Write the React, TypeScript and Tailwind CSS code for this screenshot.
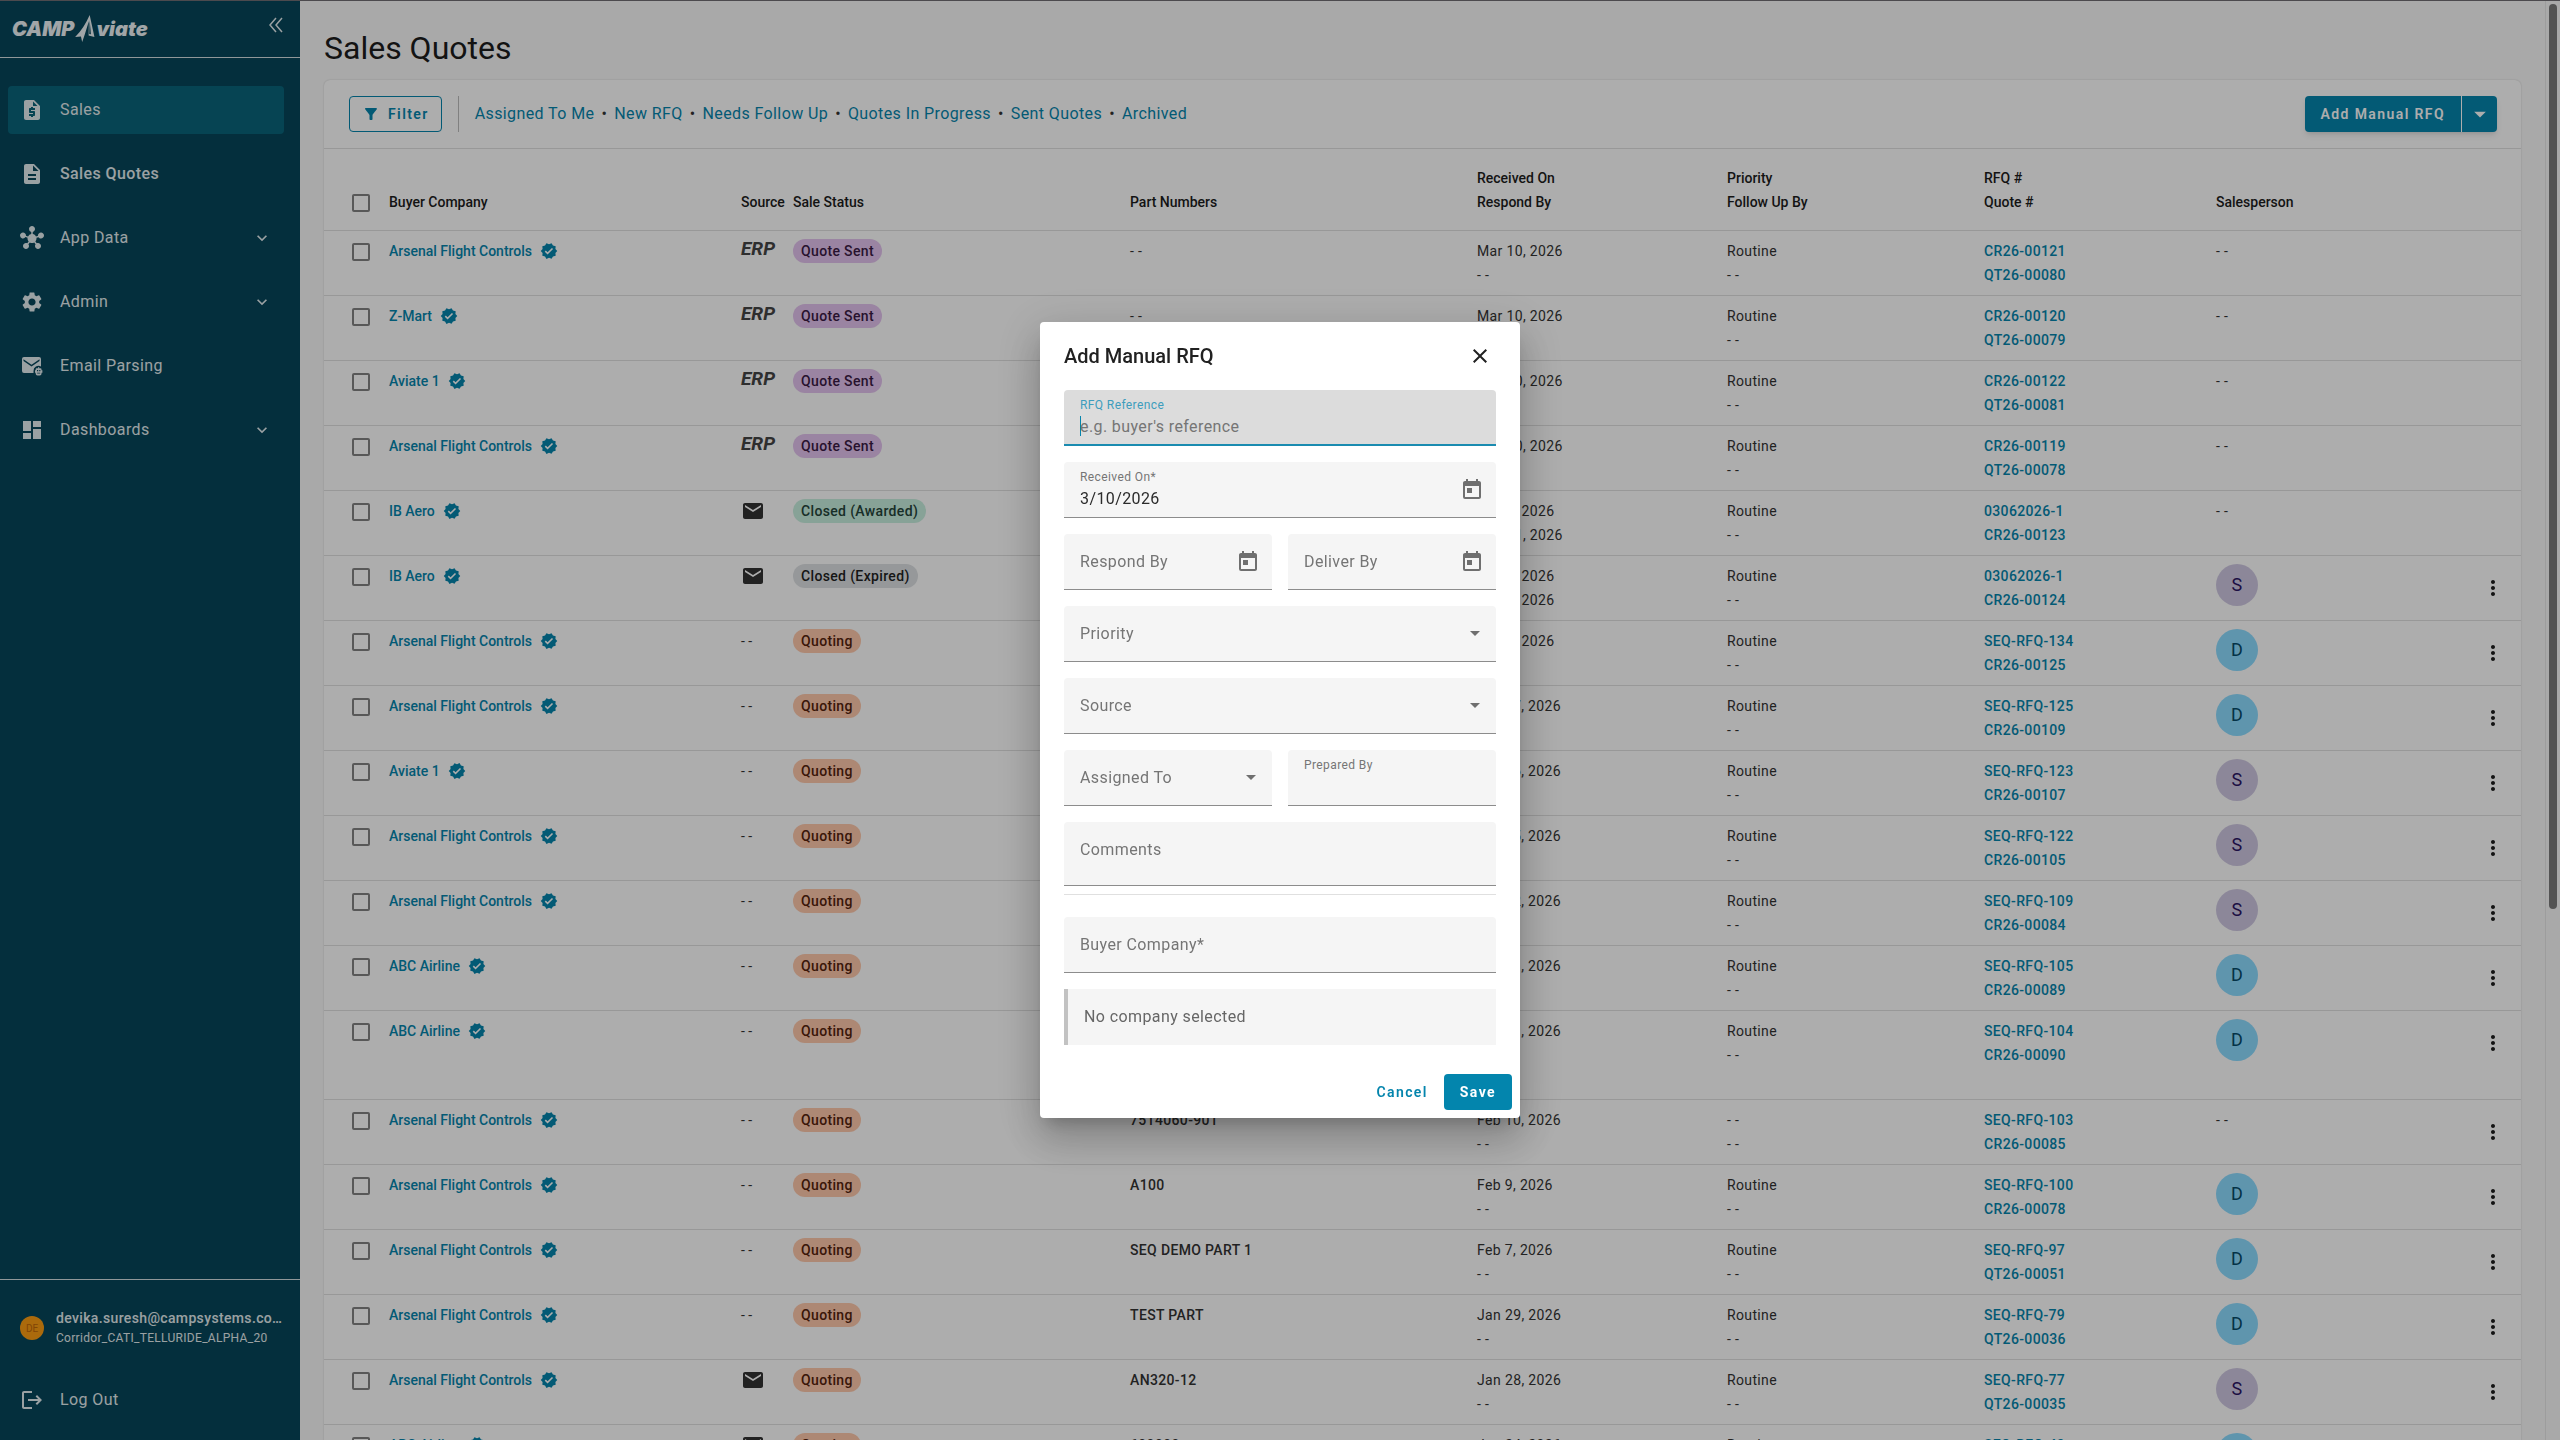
import React from "react";
import {
  MdArrowDropDown,
  MdClose,
  MdDashboard,
  MdDescription,
  MdEmail,
  MdFilterAlt,
  MdHub,
  MdKeyboardArrowDown,
  MdLogout,
  MdMoreVert,
  MdRequestQuote,
  MdSettings,
  MdToday,
  MdVerified,
} from "react-icons/md";

type Status = "Quote Sent" | "Closed (Awarded)" | "Closed (Expired)" | "Quoting";

type Quote = {
  company: string;
  source: "erp" | "mail" | "none";
  status: Status;
  part: string;
  received: string;
  respond: string;
  priority: string;
  rfq: string;
  quote: string;
  person: "S" | "D" | "";
  menu: boolean;
  extraLine?: string;
};

const NONE = "- -";
const AFC = "Arsenal Flight Controls";

const row = (
  company: string,
  source: Quote["source"],
  status: Status,
  part: string,
  received: string,
  rfq: string,
  quote: string,
  person: Quote["person"],
  menu: boolean,
  more: Partial<Quote> = {},
): Quote => ({ company, source, status, part, received, respond: NONE, priority: "Routine", rfq, quote, person, menu, ...more });

const quotes: Quote[] = [
  row(AFC, "erp", "Quote Sent", NONE, "Mar 10, 2026", "CR26-00121", "QT26-00080", "", false),
  row("Z-Mart", "erp", "Quote Sent", NONE, "Mar 10, 2026", "CR26-00120", "QT26-00079", "", false),
  row("Aviate 1", "erp", "Quote Sent", NONE, "Mar 10, 2026", "CR26-00122", "QT26-00081", "", false),
  row(AFC, "erp", "Quote Sent", NONE, "Mar 10, 2026", "CR26-00119", "QT26-00078", "", false),
  row("IB Aero", "mail", "Closed (Awarded)", NONE, "Mar 6, 2026", "03062026-1", "CR26-00123", "", false, { respond: "Mar 11, 2026" }),
  row("IB Aero", "mail", "Closed (Expired)", NONE, "Mar 6, 2026", "03062026-1", "CR26-00124", "S", true, { respond: "Mar 9, 2026" }),
  row(AFC, "none", "Quoting", NONE, "Mar 5, 2026", "SEQ-RFQ-134", "CR26-00125", "D", true),
  row(AFC, "none", "Quoting", NONE, "Feb 27, 2026", "SEQ-RFQ-125", "CR26-00109", "D", true),
  row("Aviate 1", "none", "Quoting", NONE, "Feb 26, 2026", "SEQ-RFQ-123", "CR26-00107", "S", true),
  row(AFC, "none", "Quoting", NONE, "Feb 25, 2026", "SEQ-RFQ-122", "CR26-00105", "S", true),
  row(AFC, "none", "Quoting", NONE, "Feb 12, 2026", "SEQ-RFQ-109", "CR26-00084", "S", true),
  row("ABC Airline", "none", "Quoting", NONE, "Feb 11, 2026", "SEQ-RFQ-105", "CR26-00089", "D", true),
  row("ABC Airline", "none", "Quoting", "7514060-901", "Feb 11, 2026", "SEQ-RFQ-104", "CR26-00090", "D", true, { extraLine: "7514060-902" }),
  row(AFC, "none", "Quoting", "7514060-901", "Feb 10, 2026", "SEQ-RFQ-103", "CR26-00085", "", true, { priority: NONE }),
  row(AFC, "none", "Quoting", "A100", "Feb 9, 2026", "SEQ-RFQ-100", "CR26-00078", "D", true),
  row(AFC, "none", "Quoting", "SEQ DEMO PART 1", "Feb 7, 2026", "SEQ-RFQ-97", "QT26-00051", "D", true),
  row(AFC, "none", "Quoting", "TEST PART", "Jan 29, 2026", "SEQ-RFQ-79", "QT26-00036", "D", true),
  row(AFC, "mail", "Quoting", "AN320-12", "Jan 28, 2026", "SEQ-RFQ-77", "QT26-00035", "S", true),
  row("ABC Airline", "mail", "Quoting", "600000", "Jan 24, 2026", "SEQ-RFQ-49", "QT26-00034", "D", true),
];

const pillStyle: Record<Status, string> = {
  "Quote Sent": "bg-[#e4c3ef] text-[#3a1a45]",
  "Closed (Awarded)": "bg-[#c8efdf] text-[#24443a]",
  "Closed (Expired)": "bg-[#dee1e4] text-[#1f1f1f]",
  Quoting: "bg-[#ffc9ac] text-[#55220c]",
};

const avatarStyle = {
  S: "bg-[#cfc8e2] text-[#2b1463]",
  D: "bg-[#8cdcff] text-[#064a68]",
};

function Logo() {
  return (
    <div className="flex items-center text-[#eef4f6]" aria-label="CAMP Aviate">
      <span className="font-['Inter'] text-[20px] leading-6 font-black italic">CAMP</span>
      <svg width="22" height="27" viewBox="0 0 19 26" fill="currentColor" aria-hidden="true">
        <path d="M14 0 18.600 21.200 13 19.800 13.200 6 9.200 19 6.800 26 5.600 20.800 0 21.200Q8.400 13 14 0Z" />
        <path d="M14 5 15.200 18.500 13.600 18.400Z" fill="#06465a" />
      </svg>
      <span className="font-['Inter'] text-[20px] leading-6 font-black italic">viate</span>
    </div>
  );
}

function EmailParsingIcon() {
  return (
    <svg width="24" height="24" viewBox="0 0 24 24" fill="currentColor" aria-hidden="true">
      <path d="M4 3h15a2 2 0 0 1 2 2v7.500a5 5 0 0 0-7.500 4.500v2H4a2 2 0 0 1-2-2V5a2 2 0 0 1 2-2Zm-.5 2.200v1.700l8 5.600 8-5.600V5.200l-8 5.500Z" fillRule="evenodd" />
      <path d="M18.200 13h1v1.200h1.300a1 1 0 0 1 1 1v1h.9v2.600h-.9v1a1.800 1.800 0 0 1-1.800 1.800h-2.200a1.800 1.800 0 0 1-1.800-1.800v-1H15v-2.600h.7v-1a1 1 0 0 1 1-1h1.500Zm-1.200 3v1.300h1.200V16Zm2.200 0v1.300h1.200V16Zm-2 2.800v.8h3v-.8Z" fillRule="evenodd" />
    </svg>
  );
}

const navItems = [
  { label: "Sales", icon: <MdRequestQuote size={24} />, active: true },
  { label: "Sales Quotes", icon: <MdDescription size={24} />, strong: true },
  { label: "App Data", icon: <MdHub size={24} />, expands: true },
  { label: "Admin", icon: <MdSettings size={24} />, expands: true },
  { label: "Email Parsing", icon: <EmailParsingIcon /> },
  { label: "Dashboards", icon: <MdDashboard size={24} />, expands: true },
];

function Sidebar() {
  return (
    <aside className="flex w-[300px] shrink-0 flex-col bg-[#06465a] text-[#e4edf0]">
      <div className="flex h-[58px] items-center justify-between border-b border-[#d5dfe2] pr-3 pl-3">
        <Logo />
        <button type="button" aria-label="Collapse menu" className="flex size-6 items-start justify-center">
          <svg width="16" height="16" viewBox="0 0 16 16" fill="none" stroke="currentColor" strokeWidth="1.500" aria-hidden="true">
            <path d="M8 1 2 8l6 7M14 1 8 8l6 7" />
          </svg>
        </button>
      </div>
      <nav className="flex flex-1 flex-col gap-4 pt-7 pr-4 pl-2">
        {navItems.map((item) => (
          <a
            key={item.label}
            href="#"
            className={`flex h-12 items-center gap-4 rounded-sm pr-3 pl-3 text-base tracking-wide ${item.active ? "bg-[#0a657b]" : ""} ${item.strong ? "font-medium" : ""}`}
          >
            {item.icon}
            <span className="flex-1">{item.label}</span>
            {item.expands && <MdKeyboardArrowDown size={20} />}
          </a>
        ))}
      </nav>
      <div className="flex h-[161px] flex-col border-t border-[#d5dfe2]">
        <div className="flex items-center gap-3 pt-7 pr-4 pl-5">
          <span className="flex size-6 shrink-0 items-center justify-center rounded-full bg-[#fc9d13] text-[10px] text-[#c0670a]">DE</span>
          <div className="min-w-0 flex-1">
            <p className="truncate text-sm leading-5 font-medium tracking-wide">devika.suresh@campsystems.com</p>
            <p className="truncate text-xs leading-5 tracking-wide">Corridor_CATI_TELLURIDE_ALPHA_20</p>
          </div>
        </div>
        <a href="#" className="mt-7 flex h-12 items-center gap-4 pl-5 text-base tracking-wide">
          <MdLogout size={24} />
          Log Out
        </a>
      </div>
    </aside>
  );
}

function CheckBox({ label }: { label: string }) {
  return (
    <input
      type="checkbox"
      aria-label={label}
      className="block size-[18px] appearance-none rounded-xs border-2 border-[#828282]"
    />
  );
}

function SourceCell({ source }: { source: Quote["source"] }) {
  if (source === "erp") return <span className="block text-[19px] leading-5 font-bold text-[#444444] italic">ERP</span>;
  if (source === "mail") return <MdEmail size={24} className="text-[#333333]" />;
  return <>{NONE}</>;
}

const columns: [string, string][] = [
  ["", "Buyer Company"],
  ["", "Source"],
  ["", "Sale Status"],
  ["", "Part Numbers"],
  ["Received On", "Respond By"],
  ["Priority", "Follow Up By"],
  ["RFQ #", "Quote #"],
  ["", "Salesperson"],
];

function QuotesTable() {
  return (
    <table className="w-full table-fixed border-collapse text-left text-sm leading-6 text-[#333333]">
      <colgroup>
        <col className="w-[65px]" />
        <col className="w-[352px]" />
        <col className="w-[52px]" />
        <col className="w-[337px]" />
        <col className="w-[347px]" />
        <col className="w-[250px]" />
        <col className="w-[257px]" />
        <col className="w-[232px]" />
        <col className="w-[249px]" />
        <col className="w-[56px]" />
      </colgroup>
      <thead>
        <tr className="h-[81px] border-b border-[#e0e0e0] align-bottom text-[#1c1c1c]">
          <th className="pb-[18px] pl-7">
            <CheckBox label="Select all" />
          </th>
          {columns.map(([top, bottom]) => (
            <th key={bottom} className="pb-4 font-medium whitespace-nowrap">
              {top && <span className="block">{top}</span>}
              <span className="block">{bottom}</span>
            </th>
          ))}
          <th aria-label="Actions" />
        </tr>
      </thead>
      <tbody>
        {quotes.map((q) => (
          <tr key={q.rfq + q.quote} className={`border-b border-[#e0e0e0] align-top ${q.extraLine ? "h-[89px]" : "h-[65px]"}`}>
            <td className="pt-3 pl-7">
              <CheckBox label={`Select ${q.rfq}`} />
            </td>
            <td className="pt-2">
              <span className="flex items-center gap-2 font-medium">
                <a href="#" className="text-[#0585ad]">{q.company}</a>
                <MdVerified size={18} className="text-[#0585ad]" />
              </span>
            </td>
            <td className="pt-2">
              <SourceCell source={q.source} />
            </td>
            <td className="pt-2">
              <span className={`inline-block rounded-full px-2 font-medium tracking-wide ${pillStyle[q.status]}`}>{q.status}</span>
            </td>
            <td className={q.part === NONE ? "pt-2 tracking-wide" : "pt-2 font-medium tracking-wide"}>
              <span className="block">{q.part}</span>
              {q.extraLine && <span className="block">{q.extraLine}</span>}
            </td>
            <td className="pt-2 tracking-wide">
              <span className="block">{q.received}</span>
              <span className="block">{q.respond}</span>
            </td>
            <td className="pt-2 tracking-wide">
              <span className="block">{q.priority}</span>
              <span className="block">{NONE}</span>
            </td>
            <td className="pt-2 font-medium tracking-wide text-[#0585ad]">
              <a href="#" className="block">{q.rfq}</a>
              <a href="#" className="block">{q.quote}</a>
            </td>
            <td className="pt-2 tracking-wide">
              {q.person ? (
                <span className={`flex size-[42px] items-center justify-center rounded-full text-lg ${avatarStyle[q.person]}`}>{q.person}</span>
              ) : (
                NONE
              )}
            </td>
            <td className="pt-2">
              {q.menu && (
                <button type="button" aria-label={`Actions for ${q.rfq}`} className="flex h-12 w-14 items-center justify-center text-[#1c1c1c]">
                  <MdMoreVert size={24} />
                </button>
              )}
            </td>
          </tr>
        ))}
      </tbody>
    </table>
  );
}

const views = ["Assigned To Me", "New RFQ", "Needs Follow Up", "Quotes In Progress", "Sent Quotes", "Archived"];

function Toolbar() {
  return (
    <div className="flex items-center border-b border-[#e0e0e0] py-4 pr-6 pl-[25px]">
      <button
        type="button"
        className="flex h-9 items-center gap-2 rounded-sm border border-[#0585ad] px-3 text-sm font-semibold tracking-widest text-[#0585ad]"
      >
        <MdFilterAlt size={18} />
        Filter
      </button>
      <span className="mx-4 h-9 w-px bg-[#bdbdbd]" />
      <nav className="flex flex-1 items-center gap-[7px] text-base tracking-wide">
        {views.map((view, i) => (
          <React.Fragment key={view}>
            {i > 0 && <span className="text-[#333333]">•</span>}
            <a href="#" className="text-[#0585ad]">{view}</a>
          </React.Fragment>
        ))}
      </nav>
      <div className="flex h-9 rounded-sm bg-[#0585ad] text-white shadow-md">
        <button type="button" className="px-4 text-sm font-semibold tracking-widest">Add Manual RFQ</button>
        <button type="button" aria-label="More RFQ options" className="flex w-9 items-center justify-center border-l border-white">
          <MdArrowDropDown size={28} />
        </button>
      </div>
    </div>
  );
}

const filled = "flex h-14 rounded-t-sm border-b border-[#8c8c8c] bg-[#f5f5f5]";

function CalendarButton({ label }: { label: string }) {
  return (
    <button type="button" aria-label={label} className="flex w-12 shrink-0 items-center justify-center text-[#6f6f6f]">
      <MdToday size={24} />
    </button>
  );
}

function DateField({ label }: { label: string }) {
  return (
    <div className={filled}>
      <input type="text" aria-label={label} placeholder={label} className="min-w-0 flex-1 pl-4 placeholder:text-[#757575] focus:outline-none" />
      <CalendarButton label={`Choose ${label} date`} />
    </div>
  );
}

function SelectField({ label }: { label: string }) {
  return (
    <div className={`${filled} items-center pr-4`}>
      <select aria-label={label} defaultValue="" className="h-full min-w-0 flex-1 appearance-none pl-4 tracking-wide text-[#757575] focus:outline-none">
        <option value="">{label}</option>
      </select>
      <svg width="10" height="5" viewBox="0 0 10 5" fill="#6f6f6f" aria-hidden="true">
        <path d="M0 0h10L5 5z" />
      </svg>
    </div>
  );
}

function ManualRfqDialog() {
  return (
    <div className="fixed inset-0 z-10 flex items-center justify-center bg-black/32">
      <form
        role="dialog"
        aria-labelledby="rfq-title"
        className="w-[480px] rounded-sm bg-white text-base tracking-wide text-[#2b2b2b] shadow-[0_11px_15px_-7px_rgba(0,0,0,0.2),0_24px_38px_3px_rgba(0,0,0,0.14),0_9px_46px_8px_rgba(0,0,0,0.12)]"
      >
        <header className="flex h-[68px] items-center justify-between pr-7 pl-6">
          <h2 id="rfq-title" className="text-xl font-medium tracking-normal text-[#212121]">Add Manual RFQ</h2>
          <button type="button" aria-label="Close" className="text-[#212121]">
            <MdClose size={24} />
          </button>
        </header>
        <div className="flex flex-col gap-4 px-6">
          <div className="flex h-14 flex-col rounded-t-sm border-b-2 border-[#1a8bb0] bg-[#dcdcdc] px-4 pt-[7px]">
            <label htmlFor="rfq-ref" className="text-xs leading-4 text-[#3d9dbd]">RFQ Reference</label>
            <div className="flex items-center">
              <span className="-mr-px h-5 w-px bg-[#0585ad]" />
              <input id="rfq-ref" type="text" placeholder="e.g. buyer's reference" className="h-[26px] min-w-0 flex-1 placeholder:text-[#757575] focus:outline-none" />
            </div>
          </div>
          <div className={filled}>
            <div className="flex min-w-0 flex-1 flex-col pt-[7px] pl-4">
              <label htmlFor="received" className="text-xs leading-4 text-[#757575]">Received On*</label>
              <input id="received" type="text" defaultValue="3/10/2026" className="h-[26px] focus:outline-none" />
            </div>
            <CalendarButton label="Choose Received On date" />
          </div>
          <div className="grid grid-cols-2 gap-4">
            <DateField label="Respond By" />
            <DateField label="Deliver By" />
          </div>
          <SelectField label="Priority" />
          <SelectField label="Source" />
          <div className="grid grid-cols-2 gap-4">
            <SelectField label="Assigned To" />
            <div className="flex h-14 flex-col rounded-t-sm border-b border-[#8c8c8c] bg-[#f5f5f5] px-4 pt-[7px]">
              <label htmlFor="prepared" className="text-xs leading-4 text-[#757575]">Prepared By</label>
              <input id="prepared" type="text" className="h-[26px] w-full focus:outline-none" />
            </div>
          </div>
          <textarea
            aria-label="Comments"
            placeholder="Comments"
            className="h-16 resize-none rounded-t-sm border-b border-[#8c8c8c] bg-[#f5f5f5] px-4 pt-4 tracking-wide placeholder:text-[#757575] focus:outline-none"
          />
        </div>
        <hr className="mx-6 mt-2 border-[#e0e0e0]" />
        <div className="flex flex-col gap-4 px-6 pt-[22px]">
          <input
            type="text"
            aria-label="Buyer Company"
            placeholder="Buyer Company*"
            className="h-14 rounded-t-sm border-b border-[#8c8c8c] bg-[#f5f5f5] px-4 tracking-wide placeholder:text-[#757575] focus:outline-none"
          />
          <p className="flex h-14 items-center border-l-4 border-[#c2c2c2] bg-[#f5f5f5] px-4 text-[#666666]">No company selected</p>
        </div>
        <footer className="flex justify-end p-2 pt-[29px] text-sm tracking-widest">
          <button type="button" className="h-9 px-4 font-semibold text-[#0585ad]">Cancel</button>
          <button type="submit" className="h-9 rounded-sm bg-[#0385ad] px-4 font-bold text-white">Save</button>
        </footer>
      </form>
    </div>
  );
}

export default function App() {
  return (
    <div className="relative flex h-screen overflow-hidden bg-[#fafafa] font-['Roboto',sans-serif]">
      <Sidebar />
      <main className="min-w-0 flex-1 overflow-hidden px-6">
        <h1 className="pt-6 text-[32px] leading-12 text-[#1c1c1c]">Sales Quotes</h1>
        <section className="mt-2 rounded-md bg-white shadow-[0_0_2px_rgba(0,0,0,0.2)]">
          <Toolbar />
          <QuotesTable />
        </section>
      </main>
      <div className="flex w-[15px] shrink-0 justify-center border-l border-[#e8e8e8] bg-[#fafafa] pt-1">
        <span className="h-[63%] w-2 rounded-full bg-[#7b7b7b]" />
      </div>
      <ManualRfqDialog />
      <div className="absolute inset-x-0 top-0 z-20 h-px bg-[#4c4a4e]" />
    </div>
  );
}
